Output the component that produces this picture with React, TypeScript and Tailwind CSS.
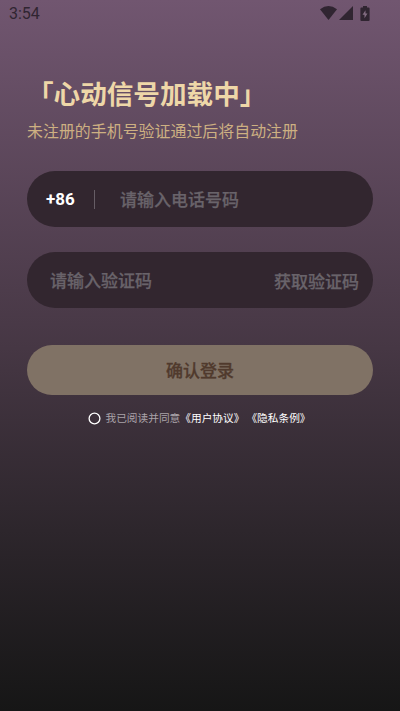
function StatusBar() {
  return (
    <header className="flex h-7 shrink-0 items-center justify-between pl-[9px] pr-[30px] text-[#302531]">
      <span className="font-[Roboto,sans-serif] text-[16px] leading-7">3:54</span>
      <div className="flex items-center pb-[2px]">
        <svg width="17" height="14" viewBox="0 0 17 14" fill="currentColor">
          <path d="M0 3.2Q8.5-3.2 17 3.2L8.5 14Z" />
        </svg>
        <svg className="ml-[2px]" width="14" height="14" viewBox="0 0 14 14" fill="currentColor">
          <path d="M14 0V14H0Z" />
        </svg>
        <svg className="ml-[7px]" width="10" height="15" viewBox="0 0 10 15">
          <path d="M3 0h4v1.6h1.6q1 0 1 1V14q0 1-1 1H1.4q-1 0-1-1V2.6q0-1 1-1H3Z" fill="currentColor" />
          <path d="M5.5 4.2 2.5 8.8h2v3.4L7.5 7.6h-2Z" fill="#846e83" />
        </svg>
      </div>
    </header>
  );
}

export default function App() {
  return (
    <div className="flex h-[711px] w-[400px] flex-col overflow-hidden bg-linear-to-b from-[#715670] via-[#463744] via-49% to-[#161616] font-['Noto_Sans_CJK_SC',sans-serif]">
      <StatusBar />
      <main className="flex flex-col px-[27px]">
        <h1 className="mt-[45px] h-10 whitespace-nowrap text-[26.6px] font-bold leading-10 text-[#eed7a8]">
          「心动信号加载中」
        </h1>
        <p className="mt-[5px] h-6 whitespace-nowrap text-[15.95px] leading-6 text-[#cdb082]">
          未注册的手机号验证通过后将自动注册
        </p>
        <div className="mt-[29px] flex h-[56px] items-center rounded-full bg-[#32262f] pl-[19px] text-[17px] text-[#69636a]">
          <span className="w-[48px] pt-[2px] font-[Roboto,sans-serif] font-bold text-white">+86</span>
          <span className="h-[19px] w-px bg-[#665d65]" />
          <span className="ml-[25px] font-medium [-webkit-text-stroke:0.25px_currentColor]">请输入电话号码</span>
        </div>
        <div className="mt-[25px] flex h-[56px] items-center justify-between rounded-full bg-[#32262f] pl-[23px] pr-[14px] text-[17px] font-medium text-[#69636a] [-webkit-text-stroke:0.25px_currentColor]">
          <span>请输入验证码</span>
          <span className="pt-px">获取验证码</span>
        </div>
        <button className="mt-[37px] h-[50px] rounded-full bg-[#807265] text-[17px] font-medium text-[#503a2d] [-webkit-text-stroke:0.3px_currentColor]">
          确认登录
        </button>
        <div className="mt-[13px] flex h-5 items-center justify-center whitespace-nowrap pr-px text-[10.7px] leading-5 text-[#aaa3a9]">
          <svg className="mr-[4px]" width="13" height="13" viewBox="0 0 13 13" fill="none" stroke="white" strokeWidth="1.3">
            <circle cx="6.5" cy="6.5" r="5.4" />
          </svg>
          <span>我已阅读并同意</span>
          <span className="text-white">《用户协议》</span>
          <span className="ml-[2px] text-white">《隐私条例》</span>
        </div>
      </main>
    </div>
  );
}
